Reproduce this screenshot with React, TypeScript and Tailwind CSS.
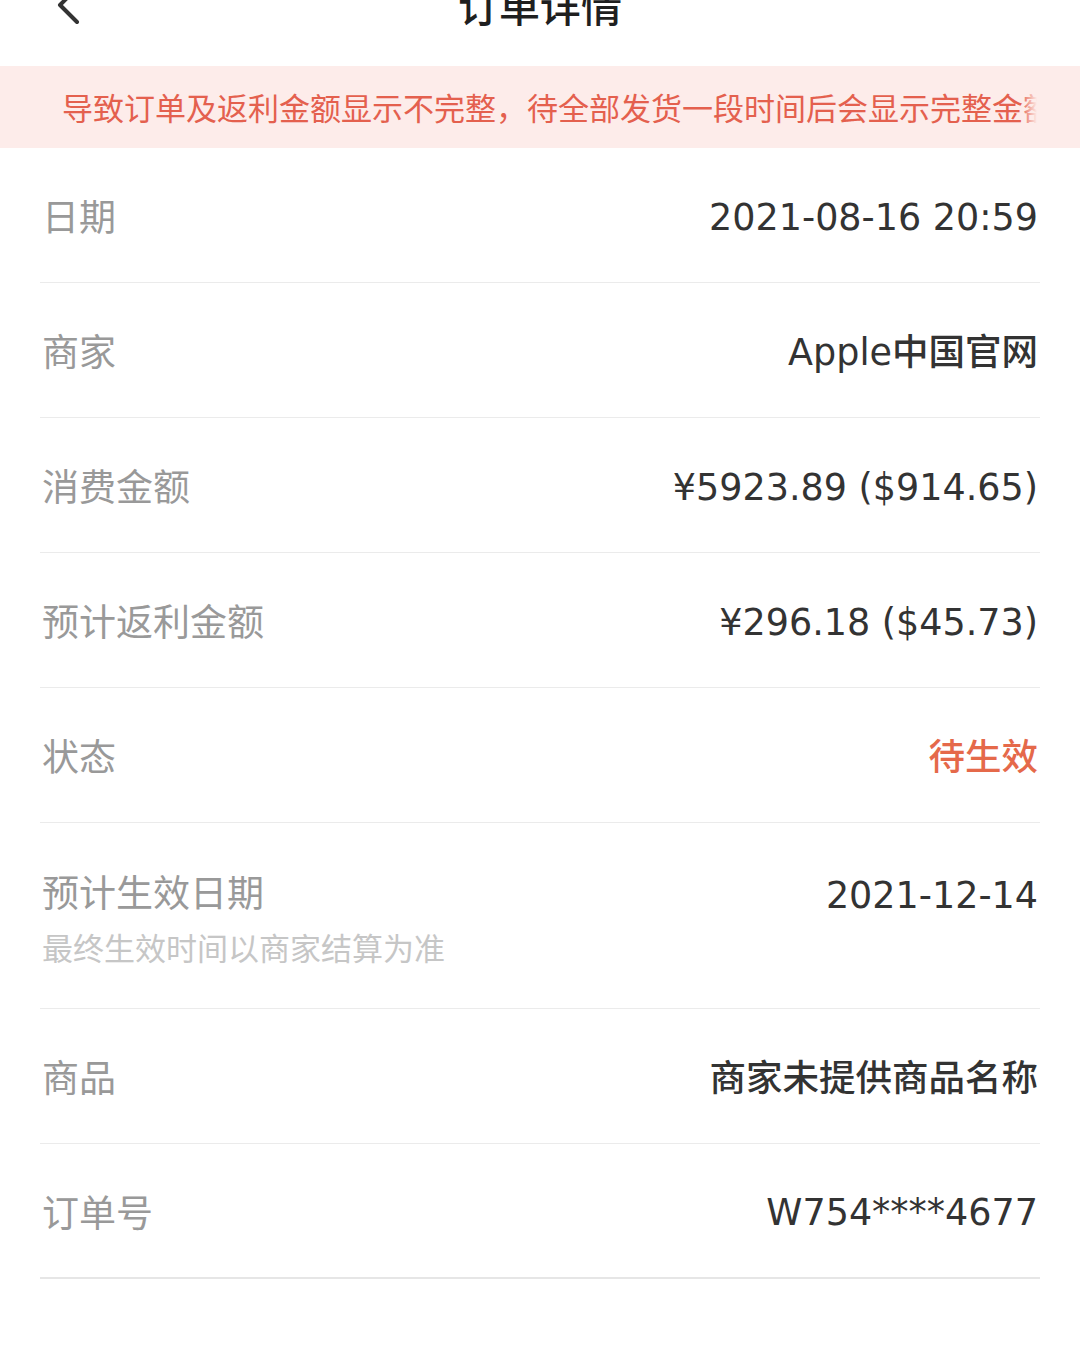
import React from 'react';

const cjk = "font-['Noto_Sans_CJK_SC',sans-serif]";
const valueFont = "font-['DejaVu_Sans','Noto_Sans_CJK_SC',sans-serif]";

interface Row {
  label: string;
  value: string;
  note?: string;
  accent?: boolean;
}

const rows: Row[] = [
  { label: '日期', value: '2021-08-16 20:59' },
  { label: '商家', value: 'Apple中国官网' },
  { label: '消费金额', value: '¥5923.89 ($914.65)' },
  { label: '预计返利金额', value: '¥296.18 ($45.73)' },
  { label: '状态', value: '待生效', accent: true },
  { label: '预计生效日期', value: '2021-12-14', note: '最终生效时间以商家结算为准' },
  { label: '商品', value: '商家未提供商品名称' },
  { label: '订单号', value: 'W754****4677' },
];

const BackIcon = () => (
  <svg width="24" height="40" viewBox="0 0 24 40" fill="none" className="overflow-visible">
    <path d="M20 3 L3 20 L20 37" stroke="#333333" strokeWidth="4" strokeLinecap="round" strokeLinejoin="round" />
  </svg>
);

const DetailRow: React.FC<{ row: Row; last: boolean }> = ({ row, last }) => {
  const valueCls = `${valueFont} pr-[2px] pt-[5px] text-[36.5px] leading-[50px] font-medium whitespace-nowrap ${
    row.accent ? 'text-[#e5694a]' : 'text-[#333333]'
  }`;

  if (row.note) {
    return (
      <div className="flex justify-between items-start pt-[43px] pb-[41px] border-b border-[#ebebeb]">
        <div className="flex flex-col pl-[2px]">
          <span className="text-[37px] leading-[50px] text-[#999999]">{row.label}</span>
          <span className="mt-[11px] text-[31px] leading-[40px] text-[#c6c6c6]">{row.note}</span>
        </div>
        <span className={valueCls}>{row.value}</span>
      </div>
    );
  }

  return (
    <div
      className={`flex justify-between items-center h-[135px] ${
        last ? 'border-b-2 border-[#e6e6e6]' : 'border-b border-[#ebebeb]'
      }`}
    >
      <span className="pl-[2px] text-[37px] leading-[50px] text-[#999999]">{row.label}</span>
      <span className={valueCls}>{row.value}</span>
    </div>
  );
};

export default function App() {
  return (
    <div className={`w-[1080px] min-h-[1350px] bg-white ${cjk}`}>
      {/* header, scrolled so most of it is off the top */}
      <div className="h-[66px] overflow-hidden">
        <div className="grid grid-cols-[1fr_auto_1fr] items-center h-[24px] -mt-[16px]">
          <div className="pl-[57px] flex items-center">
            <BackIcon />
          </div>
          <span className="text-[41px] leading-[41px] font-medium text-[#1f1f1f]">订单详情</span>
          <div />
        </div>
      </div>

      {/* notice banner (marquee, clipped at the right) */}
      <div className="h-[82px] bg-[#fdecea] flex items-center pl-[62px] pr-[43px]">
        <div className="relative flex-1 overflow-hidden">
          <p className="whitespace-nowrap text-[31px] leading-[40px] text-[#e4604e]">
            导致订单及返利金额显示不完整<span className="inline-block w-[31px]">，</span>待全部发货一段时间后会显示完整金额
          </p>
          <div className="absolute right-0 top-0 h-full w-[16px] bg-gradient-to-r from-[#fdecea00] to-[#fdecea]" />
        </div>
      </div>

      <div className="mx-[40px]">
        {rows.map((row, i) => (
          <DetailRow key={row.label} row={row} last={i === rows.length - 1} />
        ))}
      </div>
    </div>
  );
}
